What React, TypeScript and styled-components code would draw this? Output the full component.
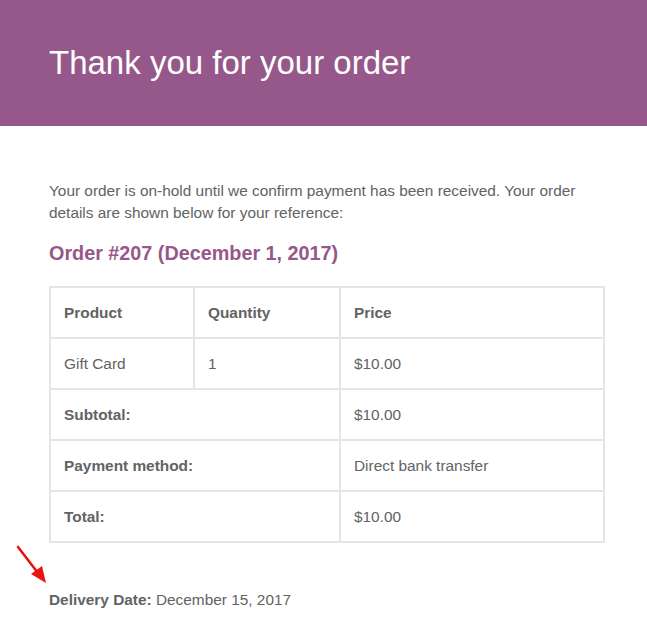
import React from "react";
import styled, { createGlobalStyle } from "styled-components";

const GlobalStyle = createGlobalStyle`
  html, body {
    margin: 0;
    padding: 0;
    background: #ffffff;
  }
  body {
    font-family: "Liberation Sans", Helvetica, Arial, sans-serif;
  }
`;

const Page = styled.div`
  position: relative;
  width: 647px;
  min-height: 635px;
  background: #ffffff;
  overflow: hidden;
`;

const Header = styled.header`
  height: 126px;
  box-sizing: border-box;
  background: #96588a;
  display: flex;
  align-items: center;
  padding: 0 49px;
`;

const Title = styled.h1`
  margin: 0;
  color: #ffffff;
  font-size: 33px;
  font-weight: 400;
  line-height: 1.2;
`;

const Content = styled.main`
  padding: 54px 40px 0 49px;
  color: #636363;
  font-size: 15.4px;
  line-height: 22px;
`;

const Intro = styled.p`
  margin: 0 0 16px;
  width: 556px;
`;

const OrderTitle = styled.h2`
  margin: 0 0 20px;
  color: #96588a;
  font-size: 19.8px;
  font-weight: 700;
  line-height: 26px;
`;

const Table = styled.table`
  width: 556px;
  table-layout: fixed;
  border-collapse: separate;
  border-spacing: 0;
  border: 1px solid #e5e5e5;
  margin: 0 0 46px;
  color: #636363;
  font-size: 15.4px;
`;

const Cell = styled.td<{ $bold?: boolean }>`
  border: 1px solid #e5e5e5;
  padding: 12px 12px 12px 13px;
  line-height: 25px;
  text-align: left;
  vertical-align: middle;
  font-weight: ${(p) => (p.$bold ? 700 : 400)};
`;

const HeadCell = styled(Cell).attrs({ as: "th" })``;

const Delivery = styled.p`
  margin: 0;
`;

const Label = styled.strong`
  font-weight: 700;
`;

const Arrow = styled.svg`
  position: absolute;
  left: 14px;
  top: 543px;
`;

export default function App() {
  return (
    <>
      <GlobalStyle />
      <Page>
        <Header>
          <Title>Thank you for your order</Title>
        </Header>
        <Content>
          <Intro>
            Your order is on-hold until we confirm payment has been received. Your order
            details are shown below for your reference:
          </Intro>
          <OrderTitle>Order #207 (December 1, 2017)</OrderTitle>
          <Table>
            <colgroup>
              <col style={{ width: 144 }} />
              <col style={{ width: 146 }} />
              <col style={{ width: 264 }} />
            </colgroup>
            <thead>
              <tr>
                <HeadCell $bold>Product</HeadCell>
                <HeadCell $bold>Quantity</HeadCell>
                <HeadCell $bold>Price</HeadCell>
              </tr>
            </thead>
            <tbody>
              <tr>
                <Cell>Gift Card</Cell>
                <Cell>1</Cell>
                <Cell>$10.00</Cell>
              </tr>
            </tbody>
            <tfoot>
              <tr>
                <HeadCell $bold colSpan={2}>Subtotal:</HeadCell>
                <Cell>$10.00</Cell>
              </tr>
              <tr>
                <HeadCell $bold colSpan={2}>Payment method:</HeadCell>
                <Cell>Direct bank transfer</Cell>
              </tr>
              <tr>
                <HeadCell $bold colSpan={2}>Total:</HeadCell>
                <Cell>$10.00</Cell>
              </tr>
            </tfoot>
          </Table>
          <Delivery>
            <Label>Delivery Date:</Label> December 15, 2017
          </Delivery>
        </Content>
        <Arrow width="40" height="46" viewBox="0 0 40 46">
          <line x1="4" y1="4" x2="24" y2="30" stroke="#ee1111" strokeWidth="2.6" strokeLinecap="round" />
          <polygon points="32,40 17,31 28,23" fill="#ee1111" />
        </Arrow>
      </Page>
    </>
  );
}
